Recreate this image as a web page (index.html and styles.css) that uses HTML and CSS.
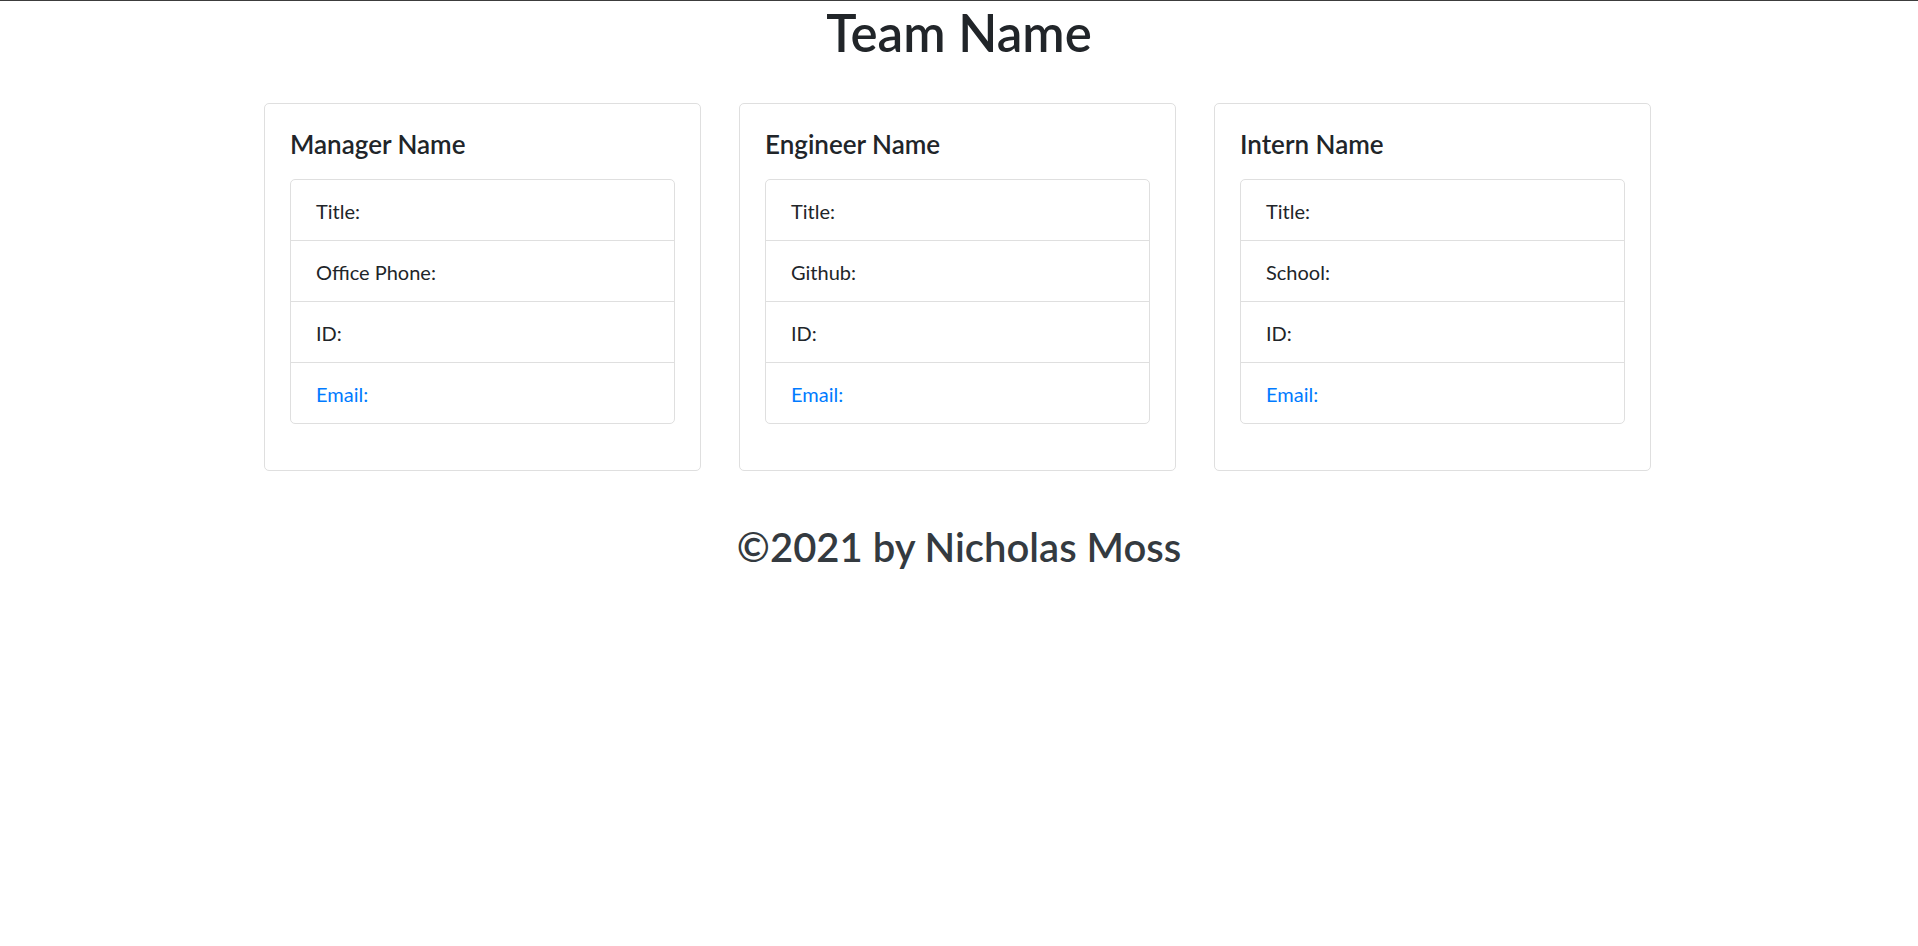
FILE: index.html
```html
<!DOCTYPE html>
<html lang="en">
<head>
<meta charset="utf-8">
<title>Team Profile</title>
<link rel="stylesheet" href="styles.css">
</head>
<body>
<div class="topbar"></div>
<header class="header">
  <h1 class="team-title">Team Name</h1>
</header>
<main class="team">
  <div class="card">
    <h5 class="card-title">Manager Name</h5>
    <ul class="list-group">
      <li class="list-item">Title:</li>
      <li class="list-item">Office Phone:</li>
      <li class="list-item">ID:</li>
      <li class="list-item"><a class="email" href="#">Email:</a></li>
    </ul>
  </div>
  <div class="card">
    <h5 class="card-title">Engineer Name</h5>
    <ul class="list-group">
      <li class="list-item">Title:</li>
      <li class="list-item">Github:</li>
      <li class="list-item">ID:</li>
      <li class="list-item"><a class="email" href="#">Email:</a></li>
    </ul>
  </div>
  <div class="card">
    <h5 class="card-title">Intern Name</h5>
    <ul class="list-group">
      <li class="list-item">Title:</li>
      <li class="list-item">School:</li>
      <li class="list-item">ID:</li>
      <li class="list-item"><a class="email" href="#">Email:</a></li>
    </ul>
  </div>
</main>
<footer class="footer">
  <h2 class="copyright">©2021 by Nicholas Moss</h2>
</footer>
</body>
</html>
```

FILE: styles.css
```css
* { box-sizing: border-box; }

html, body {
  margin: 0;
  padding: 0;
  background: #fff;
}

body {
  font-family: "Segoe UI", Lato, "Open Sans", sans-serif;
  color: #212529;
  font-size: 20px;
  line-height: 30px;
}

.topbar {
  height: 1px;
  background: #3c3c3c;
}

.header {
  display: flex;
  justify-content: center;
}

.team-title {
  margin: 2px 0 0;
  font-size: 51px;
  line-height: 60px;
  font-weight: 600;
  color: #212529;
}

.team {
  display: grid;
  grid-template-columns: repeat(3, 437px);
  column-gap: 38px;
  justify-content: center;
  margin-top: 40px;
  padding-right: 3px;
}

.card {
  border: 1px solid #dfdfdf;
  border-radius: 5px;
  padding: 25px 25px 25px;
}

.card-title {
  margin: 0 0 20px;
  font-size: 26px;
  line-height: 30px;
  font-weight: 600;
  color: #212529;
}

.list-group {
  list-style: none;
  margin: 0 0 21px;
  padding: 0;
  border: 1px solid #dfdfdf;
  border-radius: 5px;
}

.list-item {
  padding: 16px 25px 14px;
  font-size: 20px;
  line-height: 30px;
  border-top: 1px solid #dfdfdf;
}

.list-item:first-child {
  border-top: 0;
}

.email {
  color: #007bff;
  text-decoration: none;
}

.footer {
  display: flex;
  justify-content: center;
  margin-top: 50px;
}

.copyright {
  margin: 0;
  font-size: 40px;
  line-height: 52px;
  font-weight: 600;
  color: #343a40;
}
```
